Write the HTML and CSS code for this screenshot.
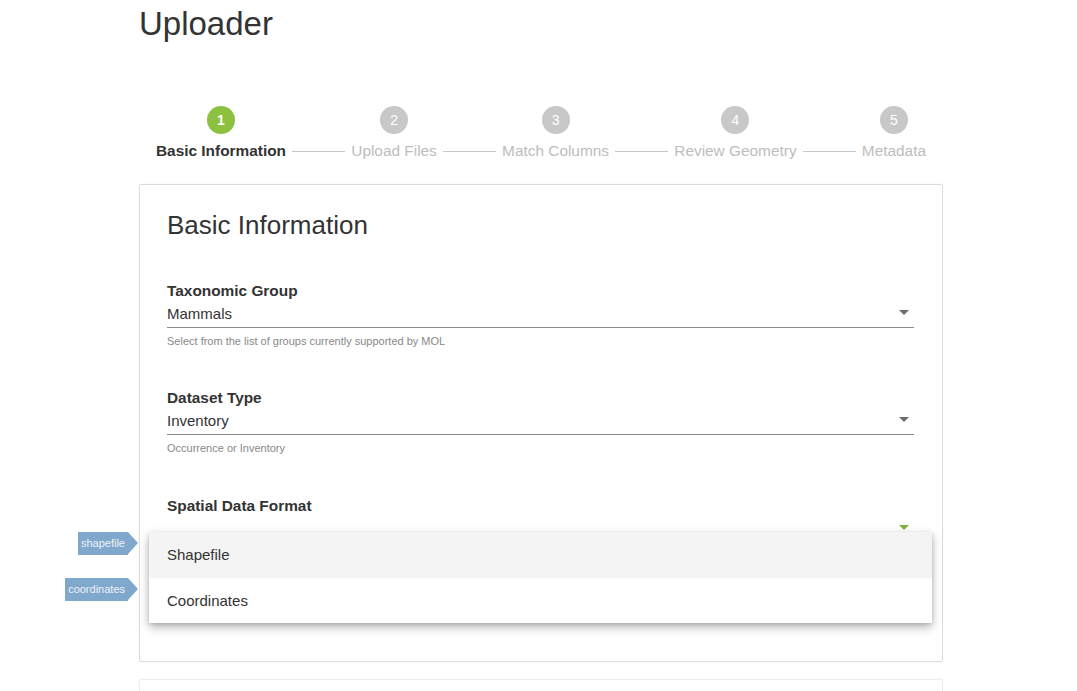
FILE: index.html
```html
<!DOCTYPE html>
<html>
<head>
<meta charset="utf-8">
<link rel="stylesheet" href="styles.css">
</head>
<body>
<div class="page">
  <h1 class="title">Uploader</h1>
  <div class="stepper">
    <div class="step active"><span class="num">1</span><span class="label">Basic Information</span></div>
    <div class="connector"></div>
    <div class="step"><span class="num">2</span><span class="label">Upload Files</span></div>
    <div class="connector"></div>
    <div class="step"><span class="num">3</span><span class="label">Match Columns</span></div>
    <div class="connector"></div>
    <div class="step"><span class="num">4</span><span class="label">Review Geometry</span></div>
    <div class="connector"></div>
    <div class="step"><span class="num">5</span><span class="label">Metadata</span></div>
  </div>
  <div class="card">
    <h2 class="card-title">Basic Information</h2>
    <div class="field">
      <div class="field-label">Taxonomic Group</div>
      <div class="select"><span>Mammals</span><span class="caret"></span></div>
      <div class="helper">Select from the list of groups currently supported by MOL</div>
    </div>
    <div class="field">
      <div class="field-label">Dataset Type</div>
      <div class="select"><span>Inventory</span><span class="caret"></span></div>
      <div class="helper">Occurrence or Inventory</div>
    </div>
    <div class="field open">
      <div class="field-label">Spatial Data Format</div>
      <div class="select focused"><span>&nbsp;</span><span class="caret green"></span></div>
      <div class="helper">&nbsp;</div>
      <div class="menu">
        <div class="menu-item hover">Shapefile<span class="tag">shapefile</span></div>
        <div class="menu-item">Coordinates<span class="tag">coordinates</span></div>
      </div>
    </div>
  </div>
  <div class="card second"></div>
</div>
</body>
</html>
```

FILE: styles.css
```css
html, body {
  margin: 0;
  padding: 0;
  background: #fff;
  font-family: "Liberation Sans", Arial, sans-serif;
  color: #333;
}

.page {
  width: 804px;
  margin-left: 139px;
}

.title {
  margin: 6px 0 0 0;
  font-size: 33px;
  font-weight: normal;
  line-height: 35px;
  color: #333;
}

.stepper {
  display: flex;
  align-items: flex-end;
  padding: 0 17px;
  margin-top: 65px;
}

.step {
  display: flex;
  flex-direction: column;
  align-items: center;
  gap: 8px;
}

.num {
  width: 28px;
  height: 28px;
  border-radius: 50%;
  background: #c8c8c8;
  color: #fff;
  font-size: 14px;
  line-height: 28px;
  text-align: center;
}

.label {
  font-size: 15.4px;
  line-height: 18px;
  color: #bdbdbd;
  white-space: nowrap;
}

.step.active .num {
  background: #8bc040;
  font-weight: bold;
}

.step.active .label {
  color: #333;
  font-weight: bold;
}

.connector {
  flex: 1;
  height: 1px;
  background: #c8c8c8;
  margin: 0 6px 8px;
}

.card {
  margin-top: 24px;
  border: 1px solid #dcdcdc;
  border-radius: 2px;
  padding: 25px 28px 40px 27px;
  box-shadow: 0 0 3px rgba(0, 0, 0, 0.04);
  height: 411px;
  box-sizing: content-box;
}

.card.second {
  margin-top: 17px;
  height: 40px;
  padding: 0;
  border-color: #eee;
}

.card-title {
  margin: 0;
  font-size: 26px;
  font-weight: normal;
  line-height: 30px;
  color: #333;
}

.field {
  position: relative;
  margin-top: 42px;
}

.field + .field {
  margin-top: 41px;
}

.field + .field.open {
  margin-top: 42px;
}

.field-label {
  font-size: 15.4px;
  font-weight: bold;
  line-height: 18px;
  color: #333;
}

.select {
  display: flex;
  justify-content: space-between;
  align-items: center;
  margin-top: 5px;
  padding-bottom: 4px;
  border-bottom: 1px solid #8a8a8a;
  font-size: 15px;
  line-height: 18px;
  color: #333;
}

.caret {
  width: 0;
  height: 0;
  border-left: 5px solid transparent;
  border-right: 5px solid transparent;
  border-top: 5px solid #6b6b6b;
  margin-right: 5px;
  margin-top: -4px;
}

.caret.green {
  border-top-color: #7cb342;
}

.helper {
  margin-top: 7px;
  font-size: 11px;
  line-height: 13px;
  color: #888;
}

.menu {
  position: absolute;
  left: -18px;
  right: -18px;
  top: 35px;
  background: #fff;
  box-shadow: 0 4px 9px rgba(0, 0, 0, 0.3), 0 1px 3px rgba(0, 0, 0, 0.12);
  z-index: 2;
}

.menu-item {
  position: relative;
  height: 46px;
  padding-left: 18px;
  font-size: 15px;
  line-height: 46px;
  color: #333;
}

.menu-item:last-child {
  height: 45px;
  line-height: 45px;
}

.menu-item.hover {
  background: #f4f4f4;
}

.tag {
  position: absolute;
  top: 0;
  right: calc(100% + 21px);
  height: 23px;
  padding: 0 3px;
  background: #80a8cc;
  color: #eef3f8;
  font-size: 11px;
  line-height: 23px;
  white-space: nowrap;
}

.tag::after {
  content: "";
  position: absolute;
  left: 100%;
  top: 0;
  border-top: 11.5px solid transparent;
  border-bottom: 11.5px solid transparent;
  border-left: 10px solid #80a8cc;
}
```
